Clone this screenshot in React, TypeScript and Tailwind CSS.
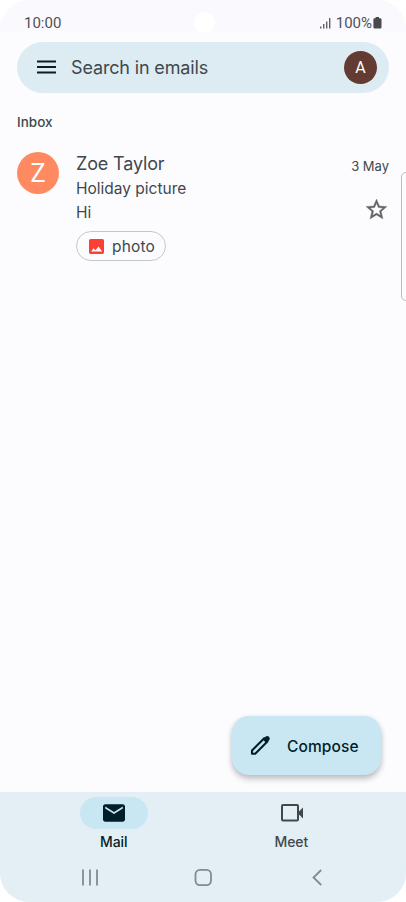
import React from "react";

function StatusBar() {
  return (
    <header className="relative flex h-[31px] items-center justify-between bg-[#faf9fe] pl-6 pr-[23px] pt-[14px] font-['Roboto',sans-serif] text-[#515154]">
      <span className="text-[15px] leading-4">10:00</span>
      <span className="absolute left-[194px] top-3 size-[21px] rounded-full bg-white" />
      <div className="flex items-center">
        <svg className="mr-[5px]" width="12" height="12" viewBox="0 0 12 12" fill="#626265">
          <rect x="1" y="9.5" width="1.4" height="2" />
          <rect x="4" y="7" width="1.4" height="4.500" />
          <rect x="7" y="4.5" width="1.4" height="7" />
          <rect x="10" y="1" width="1.4" height="10.500" />
        </svg>
        <span className="text-[15px] leading-4">100%</span>
        <svg className="ml-px mr-px" width="9" height="12" viewBox="0 0 9 12" fill="#49494b">
          <path d="M2.6 0h3.4v1.2h1.2q1.3 0 1.3 1.3v7.7q0 1.3-1.3 1.3H1.7Q.4 11.500.4 10.200V2.500Q.4 1.200 1.700 1.200h.9z" />
        </svg>
      </div>
    </header>
  );
}

function SearchBar() {
  return (
    <div className="mx-[17px] mt-[11px] flex h-[50.500px] items-center rounded-full bg-[#ddecf3] pl-5 pr-3">
      <svg width="19" height="14" viewBox="0 0 19 14" stroke="#101c22" strokeWidth="2.100">
        <path d="M0 1.500h19M0 7h19M0 12.500h19" />
      </svg>
      <span className="ml-[15px] flex-1 pt-px text-[18px] leading-6 tracking-[-0.15px] text-[#40484c]">Search in emails</span>
      <span className="flex size-[33px] items-center justify-center rounded-full bg-[#633b32] pt-px font-['Roboto',sans-serif] text-[16px] text-white">A</span>
    </div>
  );
}

function MailRow() {
  return (
    <article className="flex pl-[17px] pr-[17px] pt-[19px]">
      <div className="flex size-[42px] items-center justify-center rounded-full bg-[#ff8a62] pt-px font-['Roboto',sans-serif] text-[25px] text-white">Z</div>
      <div className="ml-[17px] flex flex-1 flex-col items-start text-[#40484c]">
        <span className="text-[18px] leading-6 tracking-[-0.15px]">Zoe Taylor</span>
        <span className="pt-px text-[15.500px] leading-6">Holiday picture</span>
        <span className="text-[15.500px] leading-6">Hi</span>
        <div className="mt-[6px] flex h-[30px] w-[90px] items-center rounded-full border border-[#c0c7cc] pl-3">
          <svg width="15" height="15" viewBox="3 3 18 18" fill="#fb4033">
            <path d="M21 19V5c0-1.100-.9-2-2-2H5c-1.100 0-2 .9-2 2v14c0 1.100.9 2 2 2h14c1.100 0 2-.9 2-2z" />
            <path fill="#fff" d="m5.500 18 3-4 2.300 2.500L14.500 12l4.200 6z" />
          </svg>
          <span className="ml-2 pt-px text-[15.500px] leading-6 tracking-[0.15px]">photo</span>
        </div>
      </div>
      <div className="flex flex-col items-end">
        <span className="mt-1 text-[13px] leading-5 text-[#40484c]">3 May</span>
        <svg className="mr-0.5 mt-[23px]" width="21" height="21" viewBox="2 2 20 20" fill="#626467" stroke="#626467" strokeWidth="0.3">
          <path d="m22 9.240-7.190-.62L12 2 9.190 8.630 2 9.240l5.460 4.730L5.820 21 12 17.270 18.180 21l-1.630-7.030L22 9.240zM12 15.400l-3.760 2.270 1-4.280-3.320-2.880 4.380-.38L12 6.100l1.710 4.040 4.380.38-3.320 2.880 1 4.280L12 15.400z" />
        </svg>
      </div>
    </article>
  );
}

function BottomNavigation() {
  return (
    <nav className="h-[110px] bg-[#e3eff5]">
      <div className="flex pl-[25px] pr-[26px] pt-[5px] text-[14px] font-medium tracking-[-0.1px]">
        <div className="flex w-[178px] flex-col items-center text-[#071e27]">
          <span className="flex h-8 w-[68px] items-center justify-center rounded-full bg-[#c9e6f3]">
            <svg width="22" height="18" viewBox="2 4 20 16" fill="#001f2a">
              <path d="M20 4H4c-1.100 0-2 .9-2 2v12c0 1.100.9 2 2 2h16c1.100 0 2-.9 2-2V6c0-1.100-.9-2-2-2zm0 4-8 5-8-5V6l8 5 8-5v2z" />
            </svg>
          </span>
          <span className="mt-[3px] leading-5">Mail</span>
        </div>
        <div className="flex w-[178px] flex-col items-center text-[#40484c]">
          <span className="flex h-8 w-[68px] items-center justify-center pl-0.5">
            <svg width="22" height="18" viewBox="0 0 22 18" fill="none">
              <rect x="1" y="1" width="16" height="15.500" rx="1" stroke="#40484c" strokeWidth="2" />
              <path d="m16.500 9 5.500-5.500v11z" fill="#40484c" />
            </svg>
          </span>
          <span className="mt-[3px] leading-5">Meet</span>
        </div>
      </div>
      <div className="flex items-center pl-[82px] pt-[17px]">
        <svg width="16" height="17" viewBox="0 0 16 17" stroke="#84898d" strokeWidth="1.800">
          <path d="M1 .5v16M8 .5v16M15 .5v16" />
        </svg>
        <svg className="ml-24" width="18" height="17" viewBox="0 0 18 17" fill="none" stroke="#84898d" strokeWidth="1.800">
          <rect x="1.500" y=".9" width="15.500" height="15.200" rx="4.500" />
        </svg>
        <svg className="ml-[100px]" width="10" height="17" viewBox="0 0 10 17" fill="none" stroke="#84898d" strokeWidth="1.800">
          <path d="M9.200 1 1.500 8.500 9.200 16" />
        </svg>
      </div>
    </nav>
  );
}

export default function App() {
  return (
    <div className="h-[902px] w-[406px] bg-white font-['Inter','Roboto',sans-serif]">
      <div className="relative flex h-full flex-col overflow-hidden rounded-[29px] bg-[#fcfcff]">
        <StatusBar />
        <SearchBar />
        <h1 className="ml-[17px] mt-[19.500px] mb-px text-[13.500px] font-medium leading-5 text-[#40484c]">Inbox</h1>
        <MailRow />
        <div className="absolute left-[401px] top-[172px] h-[129px] w-3 rounded-[5px] border border-[#b9bbbd] bg-[#fcfcff]" />
        <button className="mb-[17px] mr-[25px] mt-auto flex h-[59px] w-[149px] items-center self-end rounded-[17px] bg-[#c9e6f3] pl-[18px] text-[#001f2a] shadow-[0_4px_6px_rgba(0,0,0,0.22),0_1px_5px_rgba(0,0,0,0.08)]">
          <svg className="-mt-px" width="21" height="20" viewBox="0 0 21 20">
            <path d="M2 15.500 14.200 3.300l3.200 3.200L5.200 18.700H2z" fill="none" stroke="#001f2a" strokeWidth="2.100" strokeLinejoin="round" />
            <path d="m12.700 4.500 3-3q1.500-1.100 3 .1l.5.5q1.200 1.500.1 3l-3 3z" fill="#001f2a" />
          </svg>
          <span className="ml-[16px] pt-0.5 text-[15.500px] font-medium tracking-[0.1px]">Compose</span>
        </button>
        <BottomNavigation />
      </div>
    </div>
  );
}
